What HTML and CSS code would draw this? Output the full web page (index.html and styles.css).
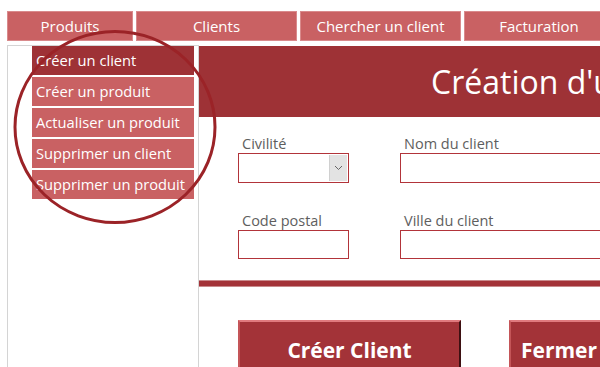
FILE: index.html
```html
<!DOCTYPE html>
<html lang="fr">
<head>
<meta charset="utf-8">
<link rel="stylesheet" href="styles.css">
</head>
<body>
<div class="page">
  <nav class="tabs">
    <div class="tab t1">Produits</div>
    <div class="tab t2">Clients</div>
    <div class="tab t3">Chercher un client</div>
    <div class="tab t4">Facturation</div>
  </nav>
  <div class="main">
    <aside class="side">
      <ul class="menu">
        <li class="item active">Créer un client</li>
        <li class="item">Créer un produit</li>
        <li class="item">Actualiser un produit</li>
        <li class="item">Supprimer un client</li>
        <li class="item">Supprimer un produit</li>
      </ul>
    </aside>
    <section class="content">
      <header class="band"><h1 class="title">Création d'un client</h1></header>
      <div class="form">
        <div class="row">
          <div class="field f1">
            <label class="lab">Civilité</label>
            <div class="box select"><span class="drop"><svg width="9" height="6" viewBox="0 0 9 6"><path d="M1 1 L4.5 4.5 L8 1" fill="none" stroke="#666" stroke-width="1"/></svg></span></div>
          </div>
          <div class="field f2">
            <label class="lab">Nom du client</label>
            <div class="box wide"></div>
          </div>
        </div>
        <div class="row r2">
          <div class="field f1">
            <label class="lab">Code postal</label>
            <div class="box small"></div>
          </div>
          <div class="field f2">
            <label class="lab">Ville du client</label>
            <div class="box wide"></div>
          </div>
        </div>
      </div>
      <div class="rule"></div>
      <div class="actions">
        <div class="btn b1">Créer Client</div>
        <div class="btn b2">Fermer</div>
      </div>
    </section>
  </div>
  <svg class="ring" width="230" height="220" viewBox="0 0 230 220">
    <ellipse cx="115" cy="110" rx="100" ry="95.5" fill="none" stroke="#9b2327" stroke-width="3"/>
  </svg>
</div>
</body>
</html>
```
FILE: styles.css
```css
* { box-sizing: border-box; margin: 0; padding: 0; }
html, body { width: 600px; height: 367px; overflow: hidden; background: #fff; }
body { font-family: "Open Sans", "Noto Sans", sans-serif; }
.page { position: relative; width: 600px; height: 367px; overflow: hidden; }

.tabs { display: flex; gap: 3px; padding: 11px 0 0 7px; height: 45px; }
.tab { height: 30px; background: #c96163; border: 1px solid #d98a8c; color: #fff; font-size: 15px; line-height: 28px; text-align: center; flex: none; }
.t1 { width: 126px; }
.t2 { width: 161px; }
.t3 { width: 161px; }
.t4 { width: 150px; }

.main { display: flex; height: 322px; margin-left: 7px; }
.side { width: 192px; border: 1px solid #d4d4d4; border-bottom: none; padding: 0 4px 0 24px; flex: none; }
.menu { list-style: none; display: flex; flex-direction: column; gap: 2px; }
.item { height: 29px; background: #c96163; color: #fff; font-size: 14.7px; line-height: 28px; padding-left: 4px; white-space: nowrap; }
.item.active { background: #9e3236; }

.content { flex: 1; padding-top: 1px; min-width: 0; }
.band { height: 71px; background: #9e3236; overflow: hidden; }
.title { color: #fff; font-weight: 400; font-size: 32px; line-height: 71px; padding-left: 232px; white-space: nowrap; }

.form { padding: 18px 0 0 39px; }
.row { display: flex; gap: 51px; }
.r2 { margin-top: 29px; }
.field { display: flex; flex-direction: column; }
.lab { color: #5e5e5e; font-size: 14.5px; line-height: 17px; padding-left: 4px; height: 18px; }
.box { height: 30px; border: 1px solid #b2343a; background: #fff; position: relative; }
.r2 .box { height: 29px; }
.select { width: 111px; }
.small { width: 111px; }
.wide { width: 220px; }
.drop { position: absolute; right: 1px; top: 1px; bottom: 1px; width: 18px; background: #e3e3e3; border-left: 1px solid #d0d0d0; display: flex; align-items: center; justify-content: center; }

.rule { margin-top: 21px; height: 7px; background: #a33338; border-top: 1px solid #c98a8c; border-bottom: 1px solid #c98a8c; }

.actions { display: flex; gap: 48px; padding: 33px 0 0 39px; }
.btn { height: 60px; background: #a33338; color: #fff; font-weight: 700; font-size: 21px; line-height: 56px; text-align: center; border-top: 2px solid #e07a7e; border-left: 2px solid #c45558; border-right: 2px solid #3d1012; flex: none; }
.b1 { width: 223px; }
.b2 { width: 120px; text-align: left; padding-left: 10px; }

.ring { position: absolute; left: 0; top: 17px; pointer-events: none; }
```
